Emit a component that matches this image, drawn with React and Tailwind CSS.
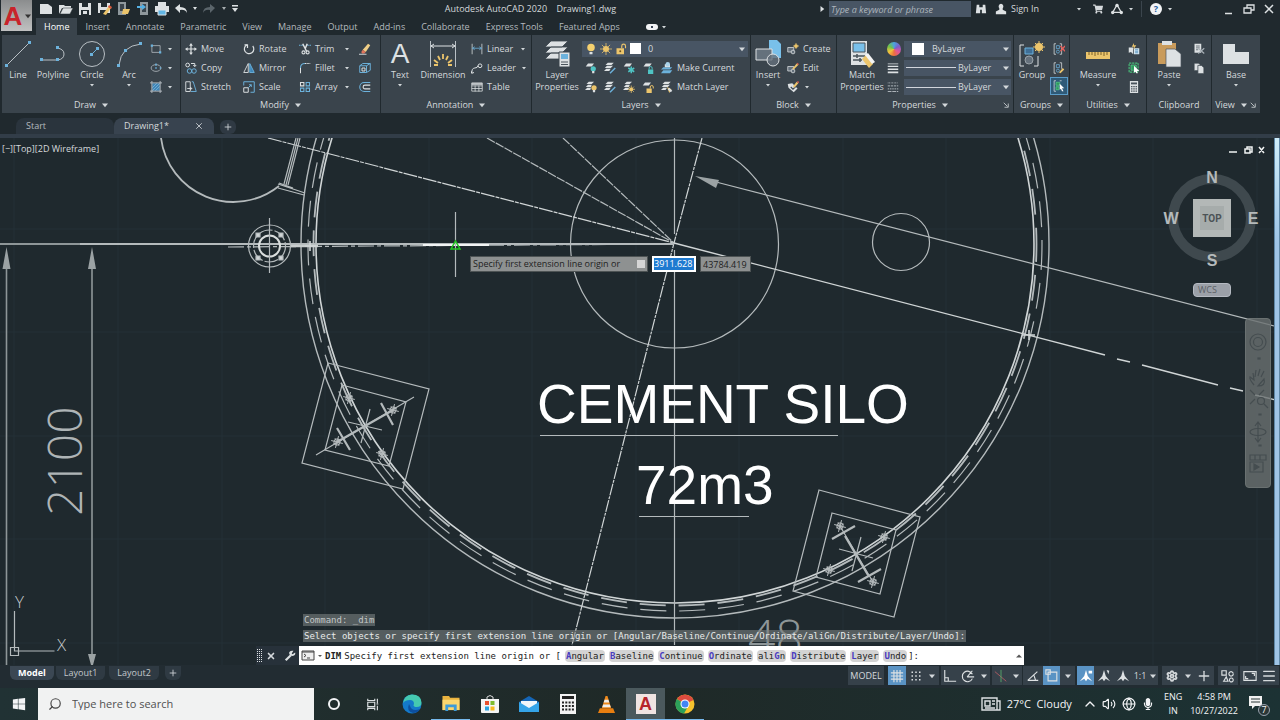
import React, { useState } from 'react';
import { FaWindows, FaShoppingCart, FaMicrophone } from 'react-icons/fa';
import { Search, Volume2, Globe, ChevronUp, Settings, Plus, Menu, X } from 'lucide-react';

const W = '#dde1e3';
const B = '#6cb2dc';
const Y = '#ecc56c';

// small 16x16 drawings used in the ribbon
const glyphs = {
  rect: <g fill="none" stroke="#b9c0c5"><path d="M2.500 3.500h11v9h-11z" /><path d="M1 2h3v3H1zM12 11h3v3h-3z" fill={B} stroke="none" /></g>,
  ellipse: <g><ellipse cx="8" cy="8" rx="6.500" ry="4.500" fill="none" stroke="#b9c0c5" /><path d="M7 7h2v2H7zM7 2h2v3H7zM13 7h2v2h-2z" fill={B} /></g>,
  hatch: <g><path d="M3 3h10v10H3z" fill="#3f86b8" /><path d="M3 9l6-6M3 13L13 3M7 13l6-6" stroke="#9dcdea" strokeWidth=".7" /><path d="M0 2.500h16M0 13.500h16M2.500 0v16M13.500 0v16" stroke="#b9c0c5" strokeWidth="1.200" /></g>,
  move: <g stroke={W} strokeWidth="1.600" fill={W}><path d="M8 2v12M2 8h12" /><path d="M8 0l2.500 3.500h-5zM8 16l2.500-3.500h-5zM0 8l3.500-2.500v5zM16 8l-3.500-2.500v5z" stroke="none" /></g>,
  copy: <g fill="none" strokeWidth="1.300"><circle cx="3.500" cy="4" r="2.500" stroke={W} /><path d="M8 2h5v4M11 4l2 2 2-2" stroke={W} /><circle cx="6" cy="12" r="3" stroke={B} /><circle cx="12" cy="12" r="3" stroke={B} /></g>,
  stretch: <g fill="none" stroke={W} strokeWidth="1.200"><path d="M1 1h6v13H1z" /><path d="M9 1l2 0 4 13H8" stroke={B} /><path d="M3 10h6M7 8l2 2-2 2" /></g>,
  rotate: <g fill="none" stroke={W} strokeWidth="1.600"><path d="M5 2.500a6.300 6.300 0 1 0 8 1.500" /><path d="M2 2.500h4v4" /></g>,
  mirror: <g strokeWidth="1.200"><path d="M7 2v12H1z" fill="none" stroke={W} /><path d="M9 2v12h6z" fill="#3f86b8" stroke={B} /></g>,
  scale: <g fill="none" strokeWidth="1.300"><path d="M1 9h6v6H1z" stroke={W} /><path d="M1 6V1h14v14h-5" stroke={B} /><path d="M7 9l4-4M8 5h3v3" stroke={B} /></g>,
  trim: <g fill="none" stroke={W} strokeWidth="1.500"><path d="M0 3h5M11 3h5" stroke={B} strokeDasharray="2 1" /><path d="M5 1l5 10M11 1L8 8" strokeWidth="2" /><circle cx="6" cy="12.500" r="2" /><circle cx="11.500" cy="12.500" r="2" /></g>,
  fillet: <g fill="none" strokeWidth="1.400"><path d="M2 15V8" stroke={W} /><path d="M2 8q0-6 6-6" stroke={B} /><path d="M8 2h7" stroke={W} strokeDasharray="2 1" /></g>,
  array: <g fill="none" strokeWidth="1.400"><path d="M2 2h4.500v4.500H2z" stroke={W} /><path d="M9.500 2H14v4.500H9.500zM2 9.500h4.500V14H2zM9.500 9.500H14V14H9.500z" stroke={B} /></g>,
  erase: <g><path d="M5 9l7-8 3 2-6 9z" fill="#f0cf87" /><path d="M5 9l4 3-2 2H4l-1-2z" fill="#e0755c" /><path d="M0 15h10" stroke={W} strokeWidth="1.200" /></g>,
  explode: <g fill="none" stroke={B} strokeWidth="1.300"><path d="M1 5h9v9H1zM1 5l4-3h10l-5 3M15 2v9l-5 3" /><path d="M4 8h4v4H4z" stroke={W} /></g>,
  offset: <g fill="none" strokeWidth="1.400"><path d="M15 2H7a6 6 0 0 0 0 12h8" stroke={B} /><path d="M15 5.500H8a2.500 2.500 0 0 0 0 5h7" stroke={W} /></g>,
  linear: <g fill="none" stroke={W}><path d="M1.500 1v14M14.500 1v14" /><path d="M2 7h12M5 5L2 7l3 2M11 5l3 2-3 2" stroke={B} /></g>,
  leader: <g fill="none" stroke={W} strokeWidth="1.300"><path d="M1 15q0-7 4-7t4-3" /><circle cx="12" cy="5" r="2.500" /><path d="M0 12l1 3 3-1" /></g>,
  table: <g fill="none" stroke={W}><path d="M1 2.500h14v11H1zM1 6.500h14M1 10h14M5.500 6v8M10.500 6v8" /><path d="M1 4h14" strokeWidth="2" /></g>,
  bulb: <g><circle cx="8" cy="6" r="5" fill="#f4d06f" /><path d="M6 12h4v3H6z" fill={W} /></g>,
  sun: <g><circle cx="8" cy="8" r="4" fill={Y} /><path d="M8 0v16M0 8h16M2.500 2.500l11 11M13.500 2.500l-11 11" stroke={Y} /></g>,
  unlock: <g><path d="M2 7h10v8H2z" fill={Y} /><path d="M9 7V4a2.500 2.500 0 0 1 5 0v3" fill="none" stroke={Y} strokeWidth="1.500" /><circle cx="7" cy="11" r="1.300" fill="#6a5322" /></g>,
  layBulb: <g><path d="M4 2h8l-3 4H1z" fill={W} /><circle cx="11" cy="9" r="3.500" fill="#4fc4c4" /><path d="M9.500 12h3v3h-3z" fill={W} /></g>,
  layPick: <g fill={W}><path d="M5 1h8l-3 3H2zM4 5h8l-3 3H1zM3 9h6l-2 3H0z" /><path d="M8 15l7-7" stroke={B} strokeWidth="1.800" /></g>,
  layFreeze: <g><path d="M4 2h8l-3 4H1z" fill={W} /><path d="M11 6v9M7 8l8 5M15 8l-8 5" stroke="#4fc4c4" strokeWidth="2" /></g>,
  layLock: <g><path d="M5 2h8l-3 4H2z" fill={W} /><path d="M8 10h7v6H8z" fill="#4fc4c4" /><path d="M9.500 10V8a2 2 0 0 1 4 0v2" fill="none" stroke="#4fc4c4" strokeWidth="1.300" /></g>,
  layCurrent: <g><path d="M3 7h12l-3 3H0zM3 11h12l-3 4H0z" fill={B} /><path d="M5 3h7v4H5z" fill={W} /><circle cx="9" cy="3" r="3" fill="#a9d3ea" /></g>,
  layOn: <g fill={W}><path d="M5 1h7l-3 3H2zM4 5h5l-1 3H1zM3 9h5l-1 3H0z" /><circle cx="12" cy="9" r="3.500" fill={Y} /><path d="M10.500 12h3v3h-3z" /></g>,
  layThaw: <g fill={W}><path d="M5 1h7l-3 3H2zM4 5h5l-1 3H1zM3 9h5l-1 3H0z" /><circle cx="11" cy="11" r="2.500" fill={Y} /><path d="M11 6v10M6 11h10M7.500 7.500l7 7M14.500 7.500l-7 7" stroke={Y} /></g>,
  layUnlock: <g><path d="M4 2h8l-3 4H1z" fill={W} /><path d="M6 10h7v6H6z" fill={Y} /><path d="M11 10V8a2 2 0 0 1 4 0v2" fill="none" stroke={Y} strokeWidth="1.300" /></g>,
  layMatch: <g fill={W}><path d="M5 1h8l-3 3H2zM4 5h8l-3 3H1zM3 9h5l-2 3H0z" /><path d="M8 8l6 3-3 5z" fill={Y} /><path d="M11 9l4 4-2 2-4-4z" /></g>,
  blkCreate: <g><path d="M1 6h8v6H1z" fill="#65717c" stroke={W} /><circle cx="8" cy="12" r="2.500" fill="#65717c" stroke={W} /><circle cx="12" cy="4" r="2.500" fill={Y} /><path d="M12 0v8M8 4h8" stroke={Y} /></g>,
  blkEdit: <g><path d="M1 6h8v6H1z" fill="#65717c" stroke={W} /><circle cx="8" cy="12" r="2.500" fill="#65717c" stroke={W} /><path d="M7 9l6-7 2 2-6 6z" fill={Y} /><path d="M13 2l1-1 2 2-1 1z" fill="#e0594f" /></g>,
  blkAttr: <g><path d="M1 4l6-1 7 7-5 5-7-6z" fill={W} /><path d="M5 8l3 3 5-5" stroke="#3b454d" fill="none" strokeWidth="1.500" /><path d="M8 7l5-6 2 2-5 6z" fill={Y} /><path d="M13 1l2-1 1 2-1 1z" fill="#e0594f" /></g>,
  lweight: <g fill={W}><path d="M1 2h14v1H1zM1 5h14v1.500H1zM1 8.500h14v2H1zM1 12.500h14V15H1z" /></g>,
  ltype: <g stroke="#b9c0c5" fill="none" strokeWidth="1.200"><path d="M1 2.500h14" strokeDasharray="1 1" /><path d="M1 6.500h14" strokeDasharray="3 1" /><path d="M1 10.500h14" strokeDasharray="2 1" /><path d="M1 14h14" strokeDasharray="5 1" /></g>,
  ungroup: <g fill="none" stroke={W}><path d="M4 1H1.500v14H4M9 1h2.500v14H9" /><path d="M4.500 3.500h4v4h-4z" stroke={B} /><circle cx="6.500" cy="11.500" r="2" stroke={B} /><path d="M10 4l6 7M16 4l-6 7" stroke="#e5605b" strokeWidth="1.800" /></g>,
  groupEdit: <g fill="none" stroke={W}><path d="M4 1H1.500v14H4M9 1h2.500v8" /><path d="M4.500 3.500h4v4h-4z" stroke={B} /><circle cx="6.500" cy="11.500" r="2" stroke={B} /><path d="M8 14l5-6 2 2-5 5z" fill={Y} stroke="none" /></g>,
  groupSel: <g fill="none" stroke={W}><path d="M4 1H1.500v14H4M9 1h2.500" /><path d="M4 3h5v4H4zM4 9h4v4H4z" fill="#2e9a5d" stroke="#58c98a" /><path d="M9 5l6 6-3 0 2 4-2 0-1.500-3.500L9 13z" fill="#fff" stroke="none" /></g>,
  quick: <g><path d="M1 6h6v9l-3-3-3 1z" fill={W} /><path d="M8 7h7v8H8z" fill="#d5e6f0" /><path d="M9.500 9h4M9.500 11h4M9.500 13h4" stroke="#3f86b8" /><path d="M8 0L5 5h3l-1 4 4-6H8z" fill={Y} /></g>,
  selAll: <g><path d="M1.500 1.500h12v12h-12z" fill="none" stroke="#47bd79" strokeWidth="1.500" strokeDasharray="3 1" /><path d="M4 4h7v7H4z" fill="#2e9a5d" stroke="#58c98a" /><path d="M8 5l7 7-3 0 1 3-2 0-1-2-2 1z" fill="#fff" /></g>,
  calc: <g><path d="M2.500 0h11v16h-11z" fill={W} /><path d="M4 2h8v2.500H4z" fill="#4a545c" /><path d="M4 7.500h8M4 10.500h8M4 13.500h8" stroke="#4a545c" strokeWidth="1.600" strokeDasharray="2 1" /></g>,
  cut: <g><path d="M2 1h9v12H2z" fill={W} /><path d="M4 4h5M4 6.500h5M4 9h3" stroke="#4a545c" /><path d="M7 7l8 7M15 7l-8 7" stroke="#aab2b8" strokeWidth="1.500" /></g>,
  copyClip: <g fill={W} stroke="#3b454d"><path d="M1.500 1.500h6l2 2v8h-8z" /><path d="M6.500 4.500h5l3 3v8h-8z" /></g>,
};

const Glyph = ({ name, className = 'size-3' }) => (
  <svg viewBox="0 0 16 16" className={`${className} shrink-0`} aria-hidden="true">{glyphs[name]}</svg>
);

const Caret = ({ className = 'size-1.5' }) => (
  <svg viewBox="0 0 8 8" className={`${className} shrink-0`} aria-hidden="true"><path d="M0 2h8L4 7z" fill="#d3d8db" /></svg>
);

const Panel = ({ title, width, launcher, noCaret, children }) => (
  <section className={`${width} flex shrink-0 flex-col bg-[#3a444c] pt-1`}>
    <div className="flex h-[58px]">{children}</div>
    <div className="flex h-4 items-center">
      <button className="flex flex-1 items-center justify-center gap-1.5">
        {title}
        {!noCaret && <Caret />}
      </button>
      {launcher && (
        <svg viewBox="0 0 8 8" className="mr-1 size-1.5" aria-hidden="true"><path d="M1 1l5 5M7 2v5H2" fill="none" stroke={W} /></svg>
      )}
    </div>
  </section>
);

const BigTool = ({ label, width, caret, children }) => (
  <button className={`${width} flex shrink-0 flex-col items-center leading-3`}>
    <span className="flex h-[30px] items-center justify-center">{children}</span>
    <span className="whitespace-pre">{label}</span>
    {caret && <Caret className="mt-0.5 size-1" />}
  </button>
);

const Tool = ({ icon, label, caret, width = '', spread }) => (
  <button className={`${width} flex h-[19px] shrink-0 items-center gap-1`} aria-label={label || icon}>
    <Glyph name={icon} />
    {label && <span className={`whitespace-nowrap text-left ${spread ? 'flex-1' : ''}`}>{label}</span>}
    {caret && <Caret className="ml-0.5 size-1" />}
  </button>
);

const PropSelect = ({ label, line }) => (
  <div className="flex h-4 items-center bg-[#485564] pr-0.5">
    {line ? <span className="ml-0.5 h-px w-[50px] bg-gray-300" /> : <span className="ml-2 size-3 bg-white" />}
    <select aria-label={label} className={`h-4 min-w-0 flex-1 appearance-none bg-transparent text-[9px] outline-none ${line ? 'pl-0.5' : 'pl-2'}`}>
      <option>ByLayer</option>
    </select>
    <Caret />
  </div>
);

const ribbonTabs = ['Home', 'Insert', 'Annotate', 'Parametric', 'View', 'Manage', 'Output', 'Add-ins', 'Collaborate', 'Express Tools', 'Featured Apps'];

const QuickAccess = () => (
  <svg viewBox="0 0 204 16" className="ml-1.5 h-4 w-[204px] shrink-0" aria-hidden="true">
    <path d="M2 3h8l4 3v7H2z" fill={W} />
    <path d="M21 4h5l1 1h6v2H24l-3 6z" fill={W} /><path d="M25 7h10l-3 6H22z" fill={W} stroke="#222c31" strokeWidth=".5" />
    <path d="M41 2h12v12H41z" fill={W} /><path d="M44 2h6v4h-6zM43 9h8v5h-8z" fill="#222c31" /><path d="M45 10h4v3h-4z" fill={W} />
    <path d="M60 2h12v10H60z" fill={W} /><path d="M63 2h6v4h-6zM62 9h6v3h-6z" fill="#222c31" /><path d="M65 13l6-8 2 2-5 7z" fill={Y} /><path d="M70 6l1-2 3 2-1 2z" fill="#d9593d" />
    <path d="M80 1h8v13h-8z" fill="#8f989d" /><path d="M82 3h4v7h-4z" fill="#3b454d" /><path d="M85 8h7l-2 5h-6z" fill={Y} />
    <path d="M102 1h8v13h-8z" fill="#8f989d" /><path d="M104 3h4v8h-4z" fill="#3b454d" /><path d="M99 5h5V3l4 3-4 3V7h-5z" fill="#55b1e4" />
    <path d="M120 1h8v4h-8zM117 5h14v6h-14z" fill={W} /><path d="M120 9h8v5h-8z" fill="#62b6e5" stroke={W} />
    <path d="M137 7l5-4v3q7 0 7 6-2-4-7-3v3z" fill={W} /><path d="M155 6h4l-2 3z" fill={W} />
    <path d="M177 7l-5-4v3q-7 0-7 6 2-4 7-3v3z" fill="#5b656b" /><path d="M184 6h4l-2 3z" fill="#a7adb0" />
    <path d="M194 4h6v1.500h-6zM194 7h6l-3 4z" fill={W} />
  </svg>
);

const TitleBar = () => (
  <div className="flex h-[18px] items-center">
    <QuickAccess />
    <h1 className="flex-1 whitespace-pre text-center">Autodesk AutoCAD 2020    Drawing1.dwg</h1>
    <svg viewBox="0 0 8 8" className="mr-1 size-1.5" aria-hidden="true"><path d="M2 0l5 4-5 4z" fill={W} /></svg>
    <input
      aria-label="Search help"
      placeholder="Type a keyword or phrase"
      className="h-4 w-[142px] bg-[#485564] px-0.5 text-[9px] italic outline-none placeholder:text-[#aeb6bd]"
    />
    <svg viewBox="0 0 14 14" className="ml-1 size-3" aria-hidden="true"><path d="M2 2h3v3h4V2h3l1 10H8V8H6v4H1z" fill={W} /></svg>
    <svg viewBox="0 0 14 14" className="ml-2 size-3" aria-hidden="true"><path d="M7 1a3 3 0 0 1 2 5v2l4 2v3H1v-3l4-2V6a3 3 0 0 1 2-5z" fill={W} /></svg>
    <button className="ml-1 w-[66px] text-left">Sign In</button>
    <Caret className="size-1" />
    <FaShoppingCart className="ml-3 size-2.5" />
    <svg viewBox="0 0 14 14" className="ml-2 size-3" aria-hidden="true"><path d="M7 2l5 9H2z" fill="none" stroke={W} strokeWidth="1.500" /><circle cx="7" cy="3" r="2" fill={W} /><circle cx="2" cy="11" r="2" fill={W} /><circle cx="12" cy="11" r="2" fill={W} /></svg>
    <Caret className="ml-1.5 size-1" />
    <span className="mx-2 h-4 w-px bg-[#3b454d]" />
    <button className="size-3 rounded-full bg-gray-100 text-[9px] leading-3 font-bold text-[#1d5d9c]">?</button>
    <Caret className="ml-1.5 size-1" />
    <svg viewBox="0 0 56 14" className="mr-1 ml-12 h-3.5 w-14" aria-hidden="true">
      <path d="M5 11.500h7M24 6h7v5h-7zM27 6V3h7v5h-3" fill="none" stroke={W} strokeWidth="1.300" />
      <path d="M45 3l8 8M53 3l-8 8" stroke={W} strokeWidth="1.500" />
    </svg>
  </div>
);

const Ribbon = () => (
  <div className="flex h-[78px] gap-px overflow-hidden pl-0.5">
    <Panel title="Draw" width="w-[178px]">
      <BigTool label="Line" width="w-8">
        <svg viewBox="0 0 28 28" className="size-7"><path d="M3 25L25 3" stroke="#b9c0c5" /><path d="M1 24h3v3H1zM24 1h3v3h-3z" fill={B} /></svg>
      </BigTool>
      <BigTool label="Polyline" width="w-[38px]">
        <svg viewBox="0 0 28 28" className="size-7"><path d="M3 20h16q6-1 6-6t-7-6" fill="none" stroke="#b9c0c5" /><path d="M1 18h3v3H1zM17 18h3v3h-3zM17 6h3v3h-3z" fill={B} /></svg>
      </BigTool>
      <BigTool label="Circle" width="w-10" caret>
        <svg viewBox="0 0 28 28" className="size-7"><circle cx="14" cy="14" r="12.500" fill="none" stroke="#b9c0c5" /><path d="M14 14l5-5" stroke={B} /><path d="M12 13h3v3h-3zM18 7h3v3h-3z" fill={B} /></svg>
      </BigTool>
      <BigTool label="Arc" width="w-[34px]" caret>
        <svg viewBox="0 0 28 28" className="size-7"><path d="M4 25Q6 6 26 4" fill="none" stroke="#b9c0c5" /><path d="M2 24h3v3H2zM9 9h3v3H9zM24 2h3v3h-3z" fill={B} /></svg>
      </BigTool>
      <div className="ml-1">
        <Tool icon="rect" caret />
        <Tool icon="ellipse" caret />
        <Tool icon="hatch" caret />
      </div>
    </Panel>
    <Panel title="Modify" width="w-[199px]">
      <div className="ml-1 w-[58px]">
        <Tool icon="move" label="Move" />
        <Tool icon="copy" label="Copy" />
        <Tool icon="stretch" label="Stretch" />
      </div>
      <div className="w-[56px]">
        <Tool icon="rotate" label="Rotate" />
        <Tool icon="mirror" label="Mirror" />
        <Tool icon="scale" label="Scale" />
      </div>
      <div className="w-[60px]">
        <Tool icon="trim" label="Trim" width="w-[50px]" caret spread />
        <Tool icon="fillet" label="Fillet" width="w-[50px]" caret spread />
        <Tool icon="array" label="Array" width="w-[50px]" caret spread />
      </div>
      <div>
        <Tool icon="erase" />
        <Tool icon="explode" />
        <Tool icon="offset" />
      </div>
    </Panel>
    <Panel title="Annotation" width="w-[150px]">
      <BigTool label="Text" width="w-[38px]" caret>
        <span className="font-['Liberation_Sans'] text-[28px] text-[#dde1e3]">A</span>
      </BigTool>
      <BigTool label="Dimension" width="w-[48px]">
        <svg viewBox="0 0 28 28" className="size-7">
          <path d="M1.500 1v26M26.500 1v26" stroke="#b9c0c5" /><path d="M2 6h24M5 4L2 6l3 2M23 4l3 2-3 2" fill="none" stroke={W} />
          <path d="M14 14v5M9 16l2 4M19 16l-2 4M5 20l4 3M23 20l-4 3M5 25h4M19 25h4" stroke={Y} strokeWidth="1.800" />
        </svg>
      </BigTool>
      <div className="ml-1">
        <Tool icon="linear" label="Linear" width="w-[54px]" caret spread />
        <Tool icon="leader" label="Leader" width="w-[54px]" caret spread />
        <Tool icon="table" label="Table" />
      </div>
    </Panel>
    <Panel title="Layers" width="w-[218px]">
      <BigTool label={'Layer\nProperties'} width="w-[50px]">
        <svg viewBox="0 0 28 28" className="size-7">
          <path d="M8 1h17l-6 6H2zM8 7h17l-6 6H2zM8 13h17l-6 6H2z" fill={W} stroke="#3a444c" strokeWidth=".8" />
          <path d="M16 12h11v15H16z" fill={W} stroke="#3a444c" /><path d="M18 14h7v5h-7z" fill={B} /><path d="M18 22h7M18 24.500h7" stroke="#4a545c" />
        </svg>
      </BigTool>
      <div className="flex-1 pr-0.5">
        <div className="flex h-[19px] items-center">
          <div className="flex h-4 flex-1 items-center gap-[3px] bg-[#485564] px-[3px]">
            <Glyph name="bulb" /><Glyph name="sun" /><Glyph name="unlock" />
            <span className="size-[11px] bg-white" />
            <select aria-label="Layer" className="h-4 min-w-0 flex-1 appearance-none bg-transparent pl-1 text-[9px] outline-none"><option>0</option></select>
            <Caret />
          </div>
        </div>
        <div className="flex gap-[7px] pl-[3px]">
          <Tool icon="layBulb" /><Tool icon="layPick" /><Tool icon="layFreeze" /><Tool icon="layLock" />
          <Tool icon="layCurrent" label="Make Current" />
        </div>
        <div className="flex gap-[7px] pl-[3px]">
          <Tool icon="layOn" /><Tool icon="layPick" /><Tool icon="layThaw" /><Tool icon="layUnlock" />
          <Tool icon="layMatch" label="Match Layer" />
        </div>
      </div>
    </Panel>
    <Panel title="Block" width="w-[85px]">
      <BigTool label="Insert" width="w-[34px]" caret>
        <svg viewBox="0 0 28 28" className="size-7">
          <path d="M15 0h8l4 4v14H15z" fill="#79c0ea" /><path d="M2 9h16v11H2z" fill="#65717c" stroke={W} /><circle cx="19" cy="20" r="6" fill="#65717c" fillOpacity=".8" stroke={W} />
        </svg>
      </BigTool>
      <div className="ml-0.5">
        <Tool icon="blkCreate" label="Create" />
        <Tool icon="blkEdit" label="Edit" />
        <Tool icon="blkAttr" caret />
      </div>
    </Panel>
    <Panel title="Properties" width="w-[176px]" launcher>
      <BigTool label={'Match\nProperties'} width="w-[50px]">
        <svg viewBox="0 0 28 28" className="size-7">
          <path d="M3 1h16v24H3z" fill={W} /><path d="M5 3h12v9H5z" fill="#79c0ea" stroke="#4a545c" /><path d="M5 16h12M5 20h9M9 14v4M12 18v4" stroke="#4a545c" strokeWidth="1.500" />
          <path d="M14 19l4-4 7 9-4 4z" fill={Y} /><path d="M17 15l3-2 7 9-3 2z" fill="#f4f4f4" />
        </svg>
      </BigTool>
      <div className="w-[17px]">
        <div className="flex h-[19px] items-center"><span className="size-3.5 rounded-full bg-[conic-gradient(#4aa3df,#7a5fc9,#e2559a,#ee6f3d,#f2c53d,#6cc24a,#4aa3df)]" /></div>
        <Tool icon="lweight" />
        <Tool icon="ltype" />
      </div>
      <div className="flex flex-1 flex-col justify-around pr-0.5">
        <PropSelect label="Object colour" />
        <PropSelect label="Lineweight" line />
        <PropSelect label="Linetype" line />
      </div>
    </Panel>
    <Panel title="Groups" width="w-[55px]">
      <BigTool label="Group" width="w-[36px]">
        <svg viewBox="0 0 28 28" className="size-7">
          <path d="M6 5H2v21h4M16 26h4V16" fill="none" stroke={W} /><path d="M7 8h8v6H7z" fill="#3f6f96" stroke={B} /><circle cx="11" cy="20" r="4" fill="#65717c" stroke="#9aa3a9" />
          <circle cx="21" cy="7" r="4" fill={Y} /><path d="M21 1v12M15 7h12M17 3l8 8M25 3l-8 8" stroke={Y} />
        </svg>
      </BigTool>
      <div className="flex flex-col items-center">
        <Tool icon="ungroup" />
        <Tool icon="groupEdit" />
        <button aria-label="Group selection" className="flex h-[18px] w-[18px] items-center justify-center border border-[#5a9cc8] bg-[#2f5a78]"><Glyph name="groupSel" /></button>
      </div>
    </Panel>
    <Panel title="Utilities" width="w-[76px]">
      <BigTool label="Measure" width="w-[56px]" caret>
        <svg viewBox="0 0 28 28" className="size-7"><path d="M2 12h24v7H2z" fill={Y} /><path d="M5 12v3M8 12v3M11 12v4M14 12v3M17 12v3M20 12v4M23 12v3" stroke="#7b6128" /></svg>
      </BigTool>
      <div className="ml-0.5">
        <Tool icon="quick" />
        <Tool icon="selAll" />
        <Tool icon="calc" />
      </div>
    </Panel>
    <Panel title="Clipboard" width="w-[64px]" noCaret>
      <BigTool label="Paste" width="w-[44px]" caret>
        <svg viewBox="0 0 28 28" className="size-7"><path d="M3 3h18v21H3z" fill="#c99b5b" /><path d="M7 1h10v4H7z" fill={W} /><path d="M11 9h9l6 5v13H11z" fill={W} stroke="#4a545c" strokeWidth=".7" /></svg>
      </BigTool>
      <div className="ml-0.5">
        <Tool icon="cut" />
        <Tool icon="copyClip" />
      </div>
    </Panel>
    <Panel title="View" width="w-[48px]" launcher>
      <BigTool label="Base" width="w-[48px]" caret>
        <svg viewBox="0 0 28 28" className="size-7"><path d="M1 4h12v8h14v12H1z" fill={W} /></svg>
      </BigTool>
    </Panel>
  </div>
);

// four-pointed bolt mark on the base plates
const Bolt = ({ x, y }) => (
  <g transform={`translate(${x} ${y}) rotate(15)`} strokeWidth="1">
    <path d="M-6 0H6M0-6V6" /><circle r="3" /><path d="M-3-3l6 6M3-3l-6 6" />
  </g>
);

const gridX = [14, 118, 222, 325, 429, 532, 636, 739, 843, 946, 1050, 1153, 1257];
const gridY = [229, 332, 436, 539, 643];

const Drawing = () => (
  <svg viewBox="0 138 1280 527" preserveAspectRatio="xMidYMid slice" className="absolute inset-0 size-full" fill="none" stroke="#b4babc" strokeWidth="1.200">
    <g stroke="#243036" strokeWidth="1">
      {gridX.map((x) => <path key={x} d={`M${x} 138v527`} />)}
      {gridY.map((y) => <path key={y} d={`M0 ${y}h1280`} />)}
    </g>

    {/* shell */}
    <circle cx="675" cy="244" r="374" strokeWidth="1.400" />
    <circle cx="675" cy="244" r="367" strokeDasharray="26 13" />
    <circle cx="675" cy="244" r="359" strokeWidth="1.600" stroke="#d0d5d6" />
    <circle cx="675" cy="244" r="361.500" strokeDasharray="26 13" strokeDashoffset="8" strokeWidth="1.800" />
    <circle cx="674.500" cy="244" r="104" />
    <circle cx="901" cy="242" r="28.500" />

    {/* centre lines */}
    <path d="M268 138l406 105" strokeDasharray="14 1 4 1" stroke="#d0d5d6" />
    <path d="M487 138l187 105M563 138l111 105" strokeDasharray="9 1" />
    <path d="M674.500 138v96M674.500 250v395" />
    <path d="M702 138l-28 105-102 402" strokeDasharray="12 1 3 1" stroke="#d0d5d6" />
    <path d="M674 243l431 112" stroke="#d0d5d6" strokeWidth="1.400" />
    <path d="M1117 359l13 3M1142 365l76 20M1230 388l13 3M1255 395l25 6" stroke="#d0d5d6" strokeWidth="1.400" />
    <path d="M716 182l558 144" />
    <path d="M695 176l24 4-3 8z" fill="#9ba2a4" stroke="none" />
    <path d="M0 244h80" stroke="#8e9698" strokeWidth="2" />
    <path d="M80 244h594" strokeWidth="1.800" />
    <path d="M228 247l446-3" strokeDasharray="16 3 4 3" />
    <path d="M423 245h66" stroke="#f2f4f4" strokeWidth="2" />
    <path d="M290 246h28" stroke="#c9cece" strokeWidth="2.500" />
    <path d="M305 246h11M310 241v10M1023 335h12M1029 330v10" stroke="#d0d5d6" strokeWidth="1.600" />

    {/* ladder cage */}
    <path d="M161 138A73 73 0 0 0 279 186" strokeWidth="1.800" />
    <path d="M296 138l-12 46M300 138l-12 47M298 138l-12 47M278 184l27 9M278 188l26 7M279 183l14 5" />

    {/* nozzle */}
    <g>
      <circle cx="269.500" cy="246" r="21" /><circle cx="269.500" cy="246" r="16" strokeDasharray="14 2" />
      <circle cx="269.500" cy="246" r="10.500" strokeWidth="2" stroke="#d9dddd" /><path d="M269.500 218v55" />
      <path d="M256 233h4v4h-4zM279 233h4v4h-4zM256 256h4v4h-4zM279 256h4v4h-4z" fill="#d0d5d6" />
    </g>

    {/* dimensions */}
    <g stroke="#8e9698">
      <path d="M6.500 266v399M92 266v392" strokeWidth="1.600" />
      <path d="M6.500 247l4 22h-8zM92 247l4 22h-8zM88 654h8l-3 11h-2z" fill="#9ba2a4" stroke="none" />
    </g>
    <text transform="translate(82 516) rotate(-90)" className="font-['Open_Sans'] text-[48px] font-light" fill="#aeb4b6" stroke="none">2100</text>
    <text x="748" y="654" className="font-['Open_Sans'] text-[48px] font-light" fill="#8e9698" stroke="none">48</text>

    {/* base plates */}
    <path d="M328 363l101 26-26 100-101-26zM342 385l64 17-17 64-64-16z" />
    <path d="M316 455l98-58M370 409l-9 34M348 422l34 8" />
    <path d="M337 442l56-32M381 403l12 22M337 428l13 22" strokeWidth="2.200" />
    <Bolt x={349} y={398} /><Bolt x={393} y={410} /><Bolt x={337} y={442} /><Bolt x={382} y={454} />
    <path d="M819 490l101 27-26 100-101-26zM832 513l64 17-16 64-64-17z" />
    <path d="M861 537l-9 34M839 549l34 9M840 526l33 56" />
    <path d="M845 536l23 39M832 539l23-13M858 582l23-13" strokeWidth="2.200" />
    <Bolt x={840} y={526} /><Bolt x={884} y={537} /><Bolt x={829} y={570} /><Bolt x={873} y={582} />

    <g className="font-['Liberation_Sans'] text-[55px]" fill="#fff" stroke="none">
      <text x="537" y="423">CEMENT SILO</text>
      <text x="636" y="504">72m3</text>
    </g>
    <path d="M540 435.500h298M639 516.500h110" />

    {/* cursor */}
    <path d="M455.500 212v65" />
    <path d="M451 249h9l-4.500-8z" stroke="#21c521" strokeWidth="1.500" />

    {/* UCS icon */}
    <path d="M14.500 611v40h40M10.500 647.500h8v8h-8z" />
    <g className="font-['Open_Sans'] text-[17px] font-light" fill="#c5cacc" stroke="none">
      <text x="15" y="608">Y</text><text x="57" y="651">X</text>
    </g>
  </svg>
);

const ViewCube = () => (
  <div className="absolute top-9 right-[22px] grid w-[92px] grid-cols-3 place-items-center">
    <svg viewBox="0 0 92 92" className="col-span-3 size-[92px] overflow-visible">
      <circle cx="46" cy="44" r="39" fill="none" stroke="#3f494e" strokeWidth="10" />
      <path d="M27 25h38v38H27z" fill="#b3b8b7" /><path d="M34 32h24v24H34z" fill="#a6acab" />
      <text x="46" y="48" textAnchor="middle" className="font-[Roboto] text-[10px] font-bold" fill="#4c5356">TOP</text>
      <g className="font-['Liberation_Sans'] text-[16px] font-bold" fill="#b5babb" textAnchor="middle">
        <text x="46" y="9">N</text><text x="46" y="92">S</text><text x="5" y="50">W</text><text x="87" y="50">E</text>
      </g>
    </svg>
    <button className="col-span-3 mt-[17px] h-3.5 w-[38px] rounded border border-[#b5bac2] bg-[#9ba0a8] pl-1 text-left text-[9px] leading-3 text-[#5b6067]">WCS</button>
  </div>
);

const NavBar = () => (
  <div className="absolute top-[180px] right-[9px] w-[26px] rounded border border-[#6a7171] bg-[#6a7070]/80">
    <svg viewBox="0 0 24 168" className="w-full" fill="none" stroke="#454d50" strokeWidth="1.200">
      <circle cx="12" cy="23" r="8" /><circle cx="12" cy="23" r="4.500" /><path d="M12 39h2v1h-2z" />
      <path d="M8 66q-5-6-4-8l4 3-1-7M9 58l1-7M12 57l2-7M15 58l3-6M18 60q2 7-6 7z" />
      <path d="M4 71l5 5M18 71l-5 5M9 80l-5 5" /><circle cx="15" cy="82" r="3.500" /><path d="M18 85l4 4M13 95h2v1h-2z" />
      <ellipse cx="12" cy="113" rx="8" ry="3.500" /><path d="M12 104v18M9 107l3-4 3 4M9 119l3 4 3-4M13 126h2v1h-2z" />
      <path d="M4 136h16v5H4zM9 136v5M14 136v5M4 143h13v10H4z" /><path d="M8 145l5 3-5 3z" fill="#454d50" />
    </svg>
  </div>
);

const options = ['Angular', 'Baseline', 'Continue', 'Ordinate', 'aliGn', 'Distribute', 'Layer', 'Undo'];

// highlights the shortcut capital of a command option
const Option = ({ name }) => {
  const i = name.search(/[A-Z]/);
  return (
    <button className="rounded-sm bg-[#d3d3d3] px-px">
      {name.slice(0, i)}
      <span className="font-bold text-[#4a3cc0]">{name[i]}</span>
      {name.slice(i + 1)}
    </button>
  );
};

const CommandLine = () => (
  <div className="absolute inset-x-[20%] bottom-0 font-['DejaVu_Sans_Mono'] text-[9px] leading-3">
    <div className="mb-1 ml-[47px] flex flex-col items-start gap-1 whitespace-pre">
      <span className="bg-[#7a8080]/60 px-px text-[#c3c7c7]">Command: _dim</span>
      <span className="bg-[#7a8080]/60 px-px text-[#e8eaea]">Select objects or specify first extension line origin or [Angular/Baseline/Continue/Ordinate/aliGn/Distribute/Layer/Undo]:</span>
    </div>
    <div className="flex h-[19px] items-center">
      <div className="flex h-full w-[43px] shrink-0 items-center gap-1 bg-[#27313a]">
        <svg viewBox="0 0 5 14" className="ml-px h-3.5 w-[5px]"><path d="M.5 0v14M2.500 0v14M4.500 0v14" stroke={W} strokeDasharray="1 1" /></svg>
        <button aria-label="Close"><X className="size-2.5" strokeWidth={4} /></button>
        <svg viewBox="0 0 14 14" className="ml-1 size-3"><path d="M2 12l6-6" stroke={W} strokeWidth="2.500" /><path d="M13 3l-3 2-1-1 2-3q-4-1-5 2 0 4 4 4 4-1 3-4z" fill={W} /></svg>
      </div>
      <div className="flex h-full flex-1 items-center gap-[3px] bg-white whitespace-pre text-[#222]">
        <svg viewBox="0 0 14 11" className="ml-0.5 h-[11px] w-3.5"><path d="M1 1h12v9H1z" fill="#eee" stroke="#444" /><path d="M1 2h12M3 4l2 1.500L3 7M6 8h3" stroke="#444" fill="none" /></svg>
        <svg viewBox="0 0 8 8" className="size-1"><path d="M0 2h8L4 6z" fill="#555" /></svg>
        <b>DIM</b>
        <span className="mr-px">Specify first extension line origin or [</span>
        <span className="flex gap-1">{options.map((o) => <Option key={o} name={o} />)}</span>
        <span className="-ml-0.5">]:</span>
        <svg viewBox="0 0 8 8" className="mr-0.5 ml-auto size-1.5"><path d="M0 6h8L4 2z" fill="#555" /></svg>
      </div>
    </div>
  </div>
);

const Cell = ({ width, on, children, label }) => (
  <button aria-label={label} className={`${width} flex h-[19px] items-center justify-center ${on ? 'bg-[#5a93c4]' : 'bg-[#36414a]'}`}>{children}</button>
);

const Line = ({ d, fill = 'none', className = 'size-3.5' }) => (
  <svg viewBox="0 0 16 16" className={className} fill={fill} stroke={fill === 'none' ? W : 'none'} strokeWidth="1.300"><path d={d} /></svg>
);

const PERSON = 'M8 1l2 7 5 6-5-3-2 3-2-3-5 3 5-6z';

const StatusBar = () => {
  const [layout, setLayout] = useState('Model');
  return (
    <div className="flex h-[23px] items-start bg-[#222c32]">
      <div className="flex pt-px pl-2.5">
        {['Model', 'Layout1', 'Layout2'].map((name) => (
          <button
            key={name}
            onClick={() => setLayout(name)}
            className={`h-3.5 rounded-b-md px-2 leading-3 ${layout === name ? 'bg-[#3b4753] font-bold text-white' : 'mr-0.5 ml-0.5 bg-[#2f3a43] text-[#c3c8cc]'}`}
          >
            {name}
          </button>
        ))}
        <button aria-label="New layout" className="ml-1 flex h-3.5 w-4 items-center justify-center rounded-b-md bg-[#2f3a43]"><Plus className="size-2.5" /></button>
      </div>
      <div className="ml-auto flex items-center pt-px pr-px">
        <Cell width="mr-1 w-9"><span className="text-[9px]">MODEL</span></Cell>
        <Cell width="w-[18px]" on label="Grid"><Line d="M4.500 1v14M8 1v14M11.500 1v14M1 4.500h14M1 8h14M1 11.500h14" /></Cell>
        <Cell width="w-[19px]" label="Snap"><Line fill={W} d="M2 2h2v2H2zM7 2h2v2H7zM12 2h2v2h-2zM2 7h2v2H2zM7 7h2v2H7zM12 7h2v2h-2zM2 12h2v2H2zM7 12h2v2H7zM12 12h2v2h-2z" className="size-3" /></Cell>
        <Cell width="mr-0.5 w-3.5" label="Snap menu"><Caret /></Cell>
        <Cell width="w-[17px]" label="Ortho"><Line d="M2 1v13h13M2 10h4v4" /></Cell>
        <Cell width="w-5" label="Polar"><Line d="M13 6a6 6 0 1 0 0 5M7 9h8M7 9l6-7" /></Cell>
        <Cell width="mr-0.5 w-3" label="Polar menu"><Caret /></Cell>
        <Cell width="w-[18px]" label="Isometric">
          <svg viewBox="0 0 16 16" className="size-3.5"><path d="M1 3l13 11" stroke="#b55d63" /><path d="M8 1v14" stroke="#58ab6d" /></svg>
        </Cell>
        <Cell width="mr-px w-3" label="Isometric menu"><Caret /></Cell>
        <Cell width="w-5" label="Tracking"><Line d="M2 13h12M2 13L13 3M9 7l2 6" /></Cell>
        <Cell width="w-[17px]" on label="Object snap"><Line d="M3.500 3.500h10v10h-10zM1 1h5v5H1z" /></Cell>
        <Cell width="mr-0.5 w-[15px]" label="Snap list"><Caret /></Cell>
        <Cell width="w-[17px]" on label="Annotation visibility"><Line fill="#fff" d={`${PERSON}M11 2h4v3h-4z`} /></Cell>
        <Cell width="w-5" label="Auto scale"><Line fill={W} d={`${PERSON}M11 1l3 1-1 4z`} /></Cell>
        <Cell width="w-[18px]" label="Annotation scale"><Line fill={W} d={PERSON} /></Cell>
        <Cell width="mr-1 w-[26px]"><span className="mr-1 text-[9px]">1:1</span><Caret /></Cell>
        <Cell width="w-5" label="Workspace"><Settings className="size-3" strokeWidth={3.500} /></Cell>
        <Cell width="w-3" label="Workspace menu"><Caret /></Cell>
        <Cell width="mr-1 w-5" label="Monitor"><Plus className="size-4" /></Cell>
        <Cell width="mr-0.5 w-5" label="Isolate"><Line d="M1 2h5v5H1zM14 5.500a2.500 2.500 0 1 0 0 .1M14 12.500a2.200 2.200 0 1 0 0 .1M3 14l3-5 2 5z" /></Cell>
        <Cell width="w-[19px]" label="Clean screen"><Line d="M1 3h14v10H1zM10 5h3v3M3 8v3h3" /></Cell>
        <Cell width="w-5" label="Customize"><Menu className="size-4" /></Cell>
      </div>
    </div>
  );
};

const TaskButton = ({ label, active, running, children }) => (
  <button aria-label={label} className={`flex h-full w-[39px] items-center justify-center ${active ? 'bg-[#4b595d]' : ''} ${active || running ? 'border-b border-[#76b9ed]' : ''}`}>
    {children}
  </button>
);

const Taskbar = () => (
  <footer className="flex h-8 items-center bg-linear-to-r from-[#213234] via-[#1f2927] to-[#1c3234] text-[11px] text-gray-100">
    <button aria-label="Start" className="flex h-full w-[38px] items-center justify-center"><FaWindows className="size-3.5" /></button>
    <label className="flex h-full w-[276px] items-center bg-[#f1f2f2] text-[#454545]">
      <Search className="mx-2.5 size-3.5 -scale-x-100" />
      <input aria-label="Search" placeholder="Type here to search" className="flex-1 text-[11px] outline-none placeholder:text-[#505050]" />
    </label>
    <TaskButton label="Cortana"><span className="size-3 rounded-full border-2 border-gray-100" /></TaskButton>
    <TaskButton label="Task view"><Line d="M2 2v2h8V2M2 6h8v5H2zM2 15v-2h8v2M13 2v5M13 10v5M12 8h2" /></TaskButton>
    <TaskButton label="Edge">
      <svg viewBox="0 0 20 20" className="size-5"><circle cx="10" cy="10" r="9.500" fill="#1479c9" /><path d="M1 9q1-8 9-8.500 9 0 9.500 8 0 5-6 4.500-3-1-1.500-3 0-4-4-4-5 0-7 3z" fill="#45c9b0" /><path d="M7 10q-3 7 4 9 5 0 7-4-8 3-10-3z" fill="#0d4f9f" /></svg>
    </TaskButton>
    <TaskButton label="File Explorer" running>
      <svg viewBox="0 0 20 18" className="h-[17px] w-5"><path d="M1 1h7l1 2h10v13H1z" fill="#e9b33f" /><path d="M1 5h18v11H1z" fill="#fbd76f" /><path d="M4 17v-7h12v7h-3v-4H7v4z" fill="#3d9bd9" /></svg>
    </TaskButton>
    <TaskButton label="Store">
      <svg viewBox="0 0 20 20" className="size-5"><path d="M7 6V3q3-3 6 0v3" fill="none" stroke="#ddd" /><path d="M1 5h18v13q0 1-1 1H2q-1 0-1-1z" fill="#f4f4f4" /><path d="M5 7h4v4H5z" fill="#e8502f" /><path d="M10.500 7h4v4h-4z" fill="#7ebb2d" /><path d="M5 12.500h4v4H5z" fill="#2aa3e0" /><path d="M10.500 12.500h4v4h-4z" fill="#f8b91e" /></svg>
    </TaskButton>
    <TaskButton label="Mail">
      <svg viewBox="0 0 20 18" className="h-[18px] w-5"><path d="M0 7l10-6 10 6v10H0z" fill="#1565b5" /><path d="M2 6h16v7H2z" fill="#f1f6fa" /><path d="M0 7l10 6 10-6v10H0z" fill="#35a4e8" /></svg>
    </TaskButton>
    <TaskButton label="Calculator">
      <svg viewBox="0 0 16 20" className="h-5 w-4"><path d="M0 0h16v20H0z" fill="#f3f3f3" /><path d="M2 2h12v3H2z" fill="#222" /><path d="M2 8.500h12M2 12h12M2 15.500h12" stroke="#222" strokeWidth="2" strokeDasharray="2 1.300" /></svg>
    </TaskButton>
    <TaskButton label="VLC">
      <svg viewBox="0 0 18 20" className="h-[19px] w-[17px]"><path d="M8 1h2l4 13H4z" fill="#f08a1b" /><path d="M7 5h4l1 3H6zM5.500 10h7l1 3h-9z" fill="#eee" /><path d="M2 14h14l2 5H0z" fill="#e87e10" /></svg>
    </TaskButton>
    <TaskButton label="AutoCAD" active>
      <span className="flex size-5 items-center justify-center bg-[#f0e4e2] font-['Liberation_Sans'] text-[18px] leading-none font-bold text-[#b6242b]">A</span>
    </TaskButton>
    <TaskButton label="Chrome" running>
      <svg viewBox="0 0 20 20" className="size-5"><circle cx="10" cy="10" r="9.500" fill="#f6c22d" /><path d="M10 10L2 5a9.500 9.500 0 0 1 16.500 1z" fill="#dd4b3e" /><path d="M10 10L1.800 5A9.500 9.500 0 0 0 9 19.500l4-7z" fill="#2ca15a" /><circle cx="10" cy="10" r="4.500" fill="#fff" /><circle cx="10" cy="10" r="3.500" fill="#4285f4" /></svg>
    </TaskButton>
    <div className="ml-auto flex items-center pr-3">
      <svg viewBox="0 0 20 14" className="h-3.5 w-5" fill="none" stroke={W} strokeWidth="1.400"><path d="M1 1h15v12H1zM16 4h3v9h-3M4 4h5v5H4zM11 4h3M11 7h3M4 11h10" /></svg>
      <span className="ml-1.5 whitespace-pre">27°C  Cloudy</span>
      <ChevronUp className="ml-2.5 size-4" />
      <Volume2 className="ml-1 size-3.5" />
      <Globe className="ml-1.5 size-3.5" />
      <FaMicrophone className="ml-1.5 size-3" />
      <span className="ml-2.5 text-center text-[9px] leading-[14px]">ENG<br />IN</span>
      <time className="ml-2 text-center text-[9px] leading-[14px]">4:58 PM<br />10/27/2022</time>
      <button aria-label="Notifications" className="relative ml-2.5 h-5 w-5">
        <svg viewBox="0 0 20 20" className="size-5"><path d="M1 2h13v10H7l-3 3v-3H1z" fill="#f1f1f1" /><path d="M3 5h9M3 8h9" stroke="#2a3637" /></svg>
        <span className="absolute -right-0.5 -bottom-0.5 size-3 rounded-full border border-gray-400 bg-[#2a3637] text-[9px] leading-[10px]">7</span>
      </button>
    </div>
  </footer>
);

const App = () => {
  const [tab, setTab] = useState('Home');
  return (
    <div className="flex min-h-screen flex-col bg-[#20292e] font-['Open_Sans',sans-serif] text-[9px] leading-3 text-[#d5d9dc]">
      <header className="flex">
        <button aria-label="Application menu" className="mb-1 ml-px flex h-[31px] w-[31px] shrink-0 items-center bg-linear-to-b from-[#8b8d8e] to-[#c0c1c1]">
          <span className="w-6 text-center font-['Liberation_Sans'] text-[26px] leading-none font-bold text-[#c9232a]">A</span>
          <svg viewBox="0 0 8 8" className="size-1.5"><path d="M0 2h8L4 7z" fill="#333" /></svg>
        </button>
        <div className="flex-1">
          <TitleBar />
          <nav className="flex h-[17px] items-center pl-1">
            {ribbonTabs.map((t) => (
              <button
                key={t}
                onClick={() => setTab(t)}
                className={`h-full px-2 ${t === tab ? 'bg-[#3a444c] text-white' : 'text-[#b4babe]'}`}
              >
                {t}
              </button>
            ))}
            <span className="ml-[18px] flex h-1.5 w-3 items-center justify-center rounded-sm bg-gray-100"><span className="size-0.5 bg-gray-700" /></span>
            <Caret className="ml-1 size-1" />
          </nav>
        </div>
      </header>
      <Ribbon />
      <div className="flex h-[25px] items-end border-b-4 border-[#323d48] pl-4">
        <button className="h-4 w-[98px] rounded-t-lg bg-[#2a343d] pl-2.5 text-left text-[#b4babe]">Start</button>
        <div className="flex h-4 w-[100px] items-center justify-between rounded-t-lg bg-[#38434f] pr-2.5 pl-2.5">
          <button>Drawing1*</button>
          <button aria-label="Close drawing"><X className="size-2.5" /></button>
        </div>
        <button aria-label="New drawing" className="ml-1.5 flex h-3.5 w-4 items-center justify-center rounded-md bg-[#2f3943]"><Plus className="size-2.5" /></button>
      </div>
      <main className="relative flex-1 overflow-hidden bg-[#1f292e]">
        <Drawing />
        <p className="absolute top-[5px] left-0.5">[−][Top][2D Wireframe]</p>
        <div className="absolute top-[118px] left-[470px] flex items-center gap-1 text-[#222]">
          <span className="flex h-4 w-[178px] items-center justify-between border border-[#4d5354] bg-[#8e9191] px-0.5">
            Specify first extension line origin or
            <span className="size-2 bg-[#d5d5d5]" />
          </span>
          <span className="flex h-4 w-[44px] items-center bg-white px-0.5">
            <input aria-label="X coordinate" defaultValue="3911.628" className="h-3 w-[40px] bg-[#1e7ad0] text-[9px] text-white outline-none" />
          </span>
          <input aria-label="Y coordinate" defaultValue="43784.419" className="h-4 w-[51px] border border-[#4d5354] bg-[#8e9191] px-0.5 text-[9px] outline-none" />
        </div>
        <svg viewBox="0 0 40 10" className="absolute top-[7px] right-[15px] h-2.5 w-10" fill="none" stroke="#f1f3f3" strokeWidth="1.500">
          <path d="M4 7h8M20 4h5v4h-5zM22 4V2h5v5h-2M34 2l5 6M39 2l-5 6" />
        </svg>
        <ViewCube />
        <NavBar />
        <CommandLine />
        <div className="absolute inset-y-0 right-0 w-1.5 border-x border-[#5f87a6] bg-linear-to-b from-[#cfeefa] via-[#9fc4e6] via-20% to-[#9fc4e6]" />
      </main>
      <StatusBar />
      <Taskbar />
    </div>
  );
};

export default App;
